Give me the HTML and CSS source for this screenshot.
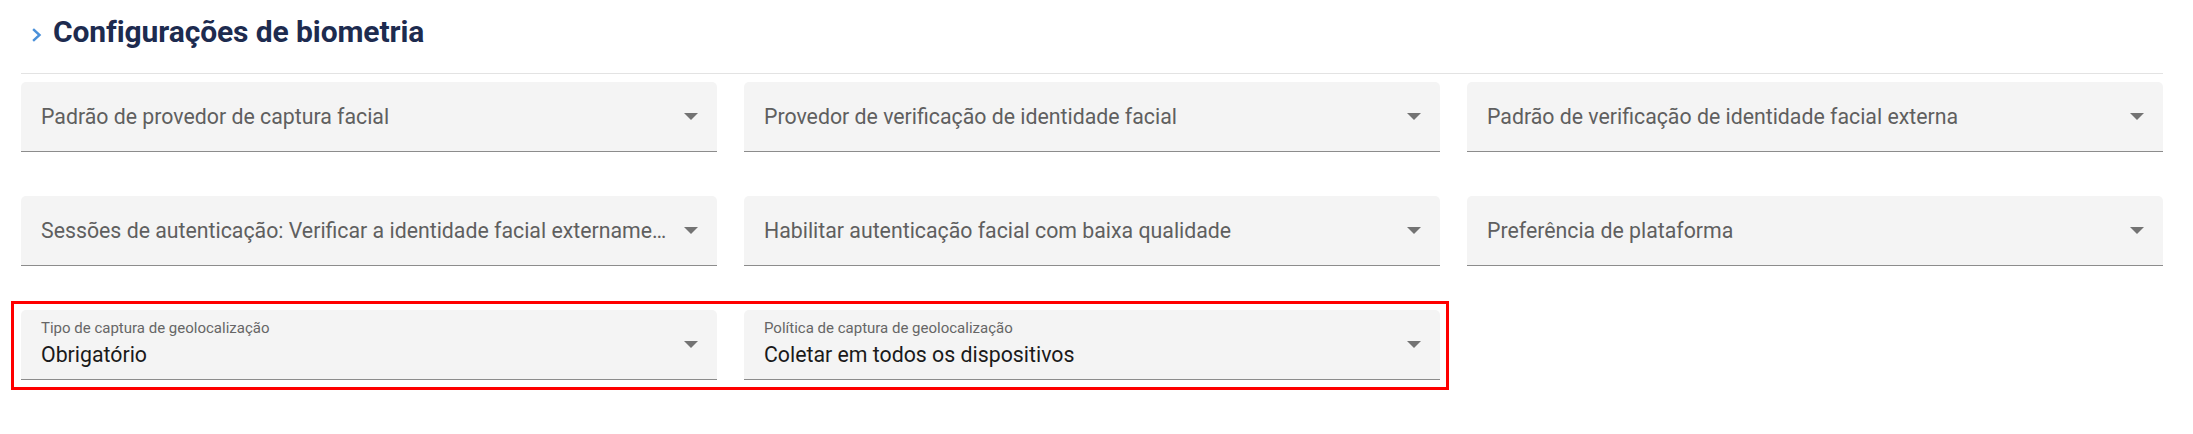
FILE: index.html
```html
<!DOCTYPE html>
<html lang="pt">
<head>
<meta charset="utf-8">
<title>Configurações de biometria</title>
<link rel="stylesheet" href="styles.css">
</head>
<body>
<section class="panel">
  <header class="panel-header">
    <svg class="chevron" viewBox="0 0 10 14" width="10" height="14" aria-hidden="true">
      <path d="M2 2 L7.5 7 L2 12" fill="none" stroke="#4a90d9" stroke-width="2.4" stroke-linecap="square"/>
    </svg>
    <h2 class="title">Configurações de biometria</h2>
  </header>
  <div class="fields">
    <div class="field"><span class="field-text">Padrão de provedor de captura facial</span><span class="arrow"></span></div>
    <div class="field"><span class="field-text">Provedor de verificação de identidade facial</span><span class="arrow"></span></div>
    <div class="field"><span class="field-text">Padrão de verificação de identidade facial externa</span><span class="arrow"></span></div>

    <div class="field"><span class="field-text">Sessões de autenticação: Verificar a identidade facial externamente em todas as sessões</span><span class="arrow"></span></div>
    <div class="field"><span class="field-text">Habilitar autenticação facial com baixa qualidade</span><span class="arrow"></span></div>
    <div class="field"><span class="field-text">Preferência de plataforma</span><span class="arrow"></span></div>

    <div class="highlight">
      <div class="field filled">
        <div class="field-body">
          <span class="float-label">Tipo de captura de geolocalização</span>
          <span class="value">Obrigatório</span>
        </div>
        <span class="arrow"></span>
      </div>
      <div class="field filled">
        <div class="field-body">
          <span class="float-label">Política de captura de geolocalização</span>
          <span class="value">Coletar em todos os dispositivos</span>
        </div>
        <span class="arrow"></span>
      </div>
    </div>
  </div>
</section>
</body>
</html>
```

FILE: styles.css
```css
html, body {
  margin: 0;
  padding: 0;
  background: #ffffff;
}

body {
  font-family: Roboto, "Noto Sans", "Liberation Sans", sans-serif;
  color: #212121;
}

.panel {
  padding: 0 30px 40px 21px;
}

.panel-header {
  display: flex;
  align-items: flex-start;
  gap: 11px;
  padding: 14px 0 0 11px;
  height: 74px;
  box-sizing: border-box;
  border-bottom: 1px solid #e3e3e3;
}

.chevron {
  margin-top: 14px;
  flex: none;
}

.title {
  margin: 0;
  font-size: 30px;
  line-height: 36px;
  font-weight: 700;
  color: #1d2b4f;
  letter-spacing: -0.1px;
}

.fields {
  display: grid;
  grid-template-columns: repeat(3, 696px);
  column-gap: 27px;
  row-gap: 44px;
  padding-top: 8px;
}

.field {
  display: flex;
  align-items: center;
  height: 70px;
  box-sizing: border-box;
  padding: 0 19px 0 20px;
  background: #f4f4f4;
  border-radius: 5px 5px 0 0;
  border-bottom: 1px solid #8c8c8c;
}

.field-text {
  flex: 1;
  min-width: 0;
  white-space: nowrap;
  overflow: hidden;
  text-overflow: ellipsis;
  font-size: 21.3px;
  line-height: 26px;
  color: #5f5f5f;
  padding-top: 1px;
}

.arrow {
  flex: none;
  width: 0;
  height: 0;
  margin-left: 13px;
  border-left: 7px solid transparent;
  border-right: 7px solid transparent;
  border-top: 7px solid #737373;
}

.highlight {
  grid-column: 1 / span 2;
  display: grid;
  grid-template-columns: repeat(2, 696px);
  column-gap: 27px;
  position: relative;
}

.highlight::after {
  content: "";
  position: absolute;
  top: -9px;
  left: -10px;
  right: -9px;
  bottom: -10px;
  border: 3px solid #ff0000;
  pointer-events: none;
}

.field-body {
  flex: 1;
  min-width: 0;
  display: flex;
  flex-direction: column;
  align-self: flex-start;
  padding-top: 9px;
}

.float-label {
  font-size: 15px;
  line-height: 18px;
  color: #666666;
}

.value {
  margin-top: 5px;
  font-size: 21.3px;
  line-height: 25px;
  color: #1a1a1a;
}
```
